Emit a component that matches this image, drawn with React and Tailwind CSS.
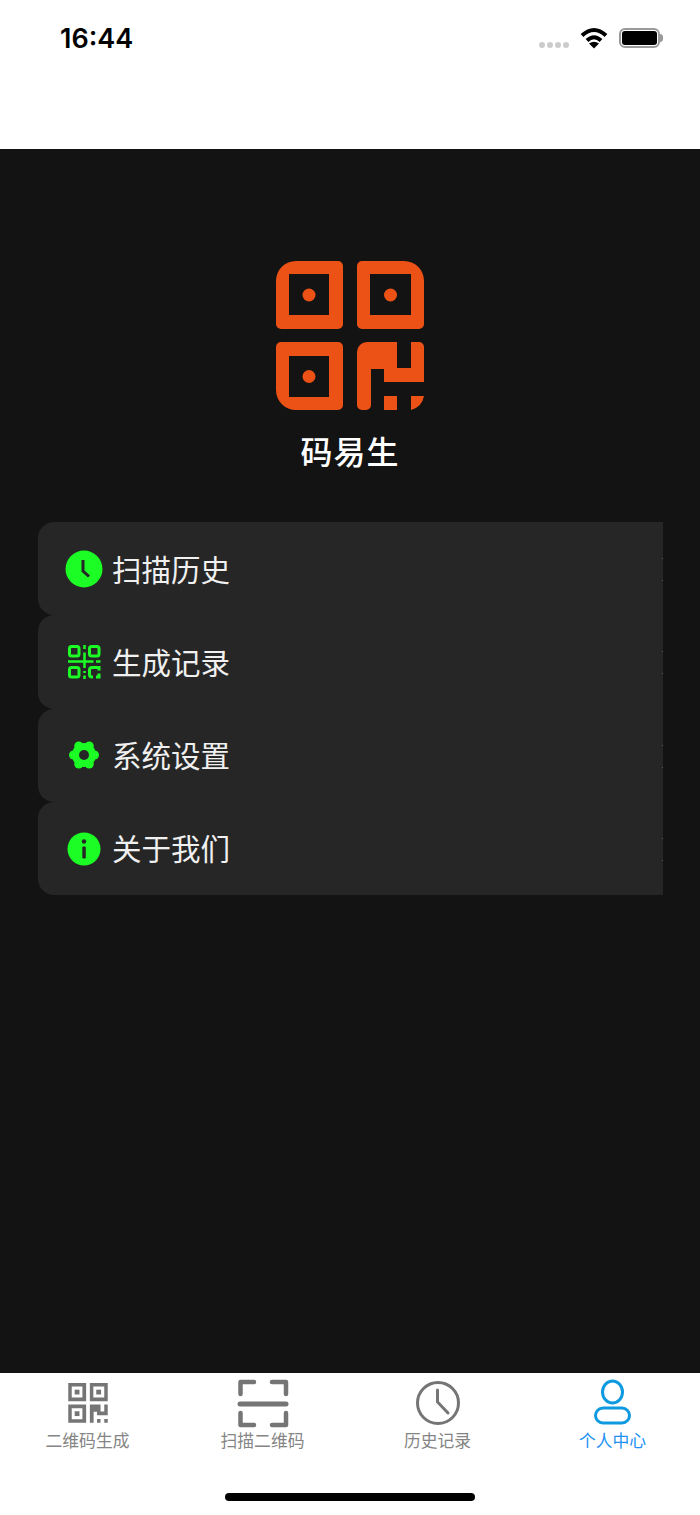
// App.jsx
const tabs = [
  { label: "二维码生成", icon: <QrTabIcon /> },
  { label: "扫描二维码", icon: <ScanIcon /> },
  { label: "历史记录", icon: <ClockOutlineIcon /> },
  { label: "个人中心", icon: <PersonIcon />, active: true },
];

const menu = [
  { label: "扫描历史", icon: <ClockFillIcon /> },
  { label: "生成记录", icon: <QrGreenIcon /> },
  { label: "系统设置", icon: <GearIcon /> },
  { label: "关于我们", icon: <InfoIcon /> },
];

function Logo() {
  return (
    <svg width="148" height="150" viewBox="0 0 148 150" fill="#EC5216">
      <path
        fillRule="evenodd"
        d="M20 0H62a5 5 0 0 1 5 5V63a5 5 0 0 1-5 5H5a5 5 0 0 1-5-5V20A20 20 0 0 1 20 0ZM13 13V54H53V13Z"
      />
      <circle cx="33" cy="34" r="6.5" />
      <path
        fillRule="evenodd"
        d="M86 0H128A20 20 0 0 1 148 20V63a5 5 0 0 1-5 5H86a5 5 0 0 1-5-5V5a5 5 0 0 1 5-5ZM94 13V54H135V13Z"
      />
      <circle cx="114.500" cy="34" r="6.5" />
      <path
        fillRule="evenodd"
        d="M5 81H62a5 5 0 0 1 5 5V144a5 5 0 0 1-5 5H20A20 20 0 0 1 0 129V86a5 5 0 0 1 5-5ZM13 95V136H53V95Z"
      />
      <circle cx="33" cy="115.500" r="6.5" />
      <path d="M91 81H121V107H135V81H143a5 5 0 0 1 5 5V121H108V108H95V144a5 5 0 0 1-5 5H86a5 5 0 0 1-5-5V91a10 10 0 0 1 10-10Z" />
      <path d="M108 135H121V149H108Z" />
      <path d="M135 135H148Q146 146 135 149Z" />
    </svg>
  );
}

function ClockFillIcon() {
  return (
    <svg width="38" height="38" viewBox="0 0 38 38">
      <circle cx="19" cy="19" r="18.500" fill="#1BFD24" />
      <path d="M18 10V21L24 26.500" fill="none" stroke="#262626" strokeWidth="3" />
    </svg>
  );
}

function QrGreenIcon() {
  return (
    <svg width="38" height="38" viewBox="0 0 38 38" fill="none" stroke="#1BFD24" strokeWidth="3">
      <rect x="4.500" y="3.500" width="9.500" height="9.500" rx="2" />
      <rect x="24.500" y="3.500" width="9.500" height="9.500" rx="2" />
      <rect x="4.500" y="24.500" width="9.500" height="9.500" rx="2" />
      <path d="M19.500 2V6M19.500 9.500V25M19.500 28V30M19.500 32.500V36" strokeWidth="2.500" />
      <path d="M3 18.500H28.500M31 18.500H35.500" strokeWidth="2.500" />
      <path d="M34 27.500V24.500H27A2.500 2.500 0 0 0 24.500 27V31.500A2.500 2.500 0 0 0 27 34H28M31 34H34V30.500" />
    </svg>
  );
}

function GearIcon() {
  const lobes = [0, 60, 120, 180, 240, 300];
  return (
    <svg width="38" height="38" viewBox="-19 -19 38 38" fill="#1BFD24">
      {lobes.map((a) => (
        <circle
          key={a}
          cx={10.5 * Math.cos((a * Math.PI) / 180)}
          cy={10.5 * Math.sin((a * Math.PI) / 180)}
          r="4.500"
        />
      ))}
      <circle r="12" />
      <circle r="5" fill="#262626" />
    </svg>
  );
}

function InfoIcon() {
  return (
    <svg width="38" height="38" viewBox="0 0 38 38">
      <circle cx="19" cy="19" r="16.500" fill="#1BFD24" />
      <circle cx="19" cy="11.500" r="2.200" fill="#262626" />
      <rect x="17.300" y="16.500" width="3.500" height="12" rx="1" fill="#262626" />
    </svg>
  );
}

function QrTabIcon() {
  return (
    <svg width="40" height="40" viewBox="0 0 148 150" fill="#757575">
      <path fillRule="evenodd" d="M0 0H67V68H0ZM13 13V54H53V13Z" />
      <rect x="24" y="25" width="18" height="18" />
      <path fillRule="evenodd" d="M81 0H148V68H81ZM94 13V54H135V13Z" />
      <rect x="105" y="25" width="18" height="18" />
      <path fillRule="evenodd" d="M0 81H67V149H0ZM13 95V136H53V95Z" />
      <rect x="24" y="106" width="18" height="18" />
      <path d="M81 81H121V107H135V81H148V121H108V108H95V149H81Z" />
      <path d="M108 135H121V149H108ZM135 135H148V149H135Z" />
    </svg>
  );
}

function ScanIcon() {
  return (
    <svg width="52" height="50" viewBox="0 0 52 50" fill="none" stroke="#757575" strokeWidth="4.500" strokeLinecap="round">
      <path d="M3.500 16V4H17M35 4H49V16M3.500 35V47H17M35 47H49V35" strokeLinejoin="round" />
      <path d="M3 26H49" strokeWidth="5" />
    </svg>
  );
}

function ClockOutlineIcon() {
  return (
    <svg width="46" height="46" viewBox="0 0 46 46" fill="none" stroke="#757575" strokeWidth="3" strokeLinecap="round">
      <circle cx="23" cy="23" r="20.500" />
      <path d="M22.500 10V22L33 33" />
    </svg>
  );
}

function PersonIcon() {
  return (
    <svg width="40" height="48" viewBox="0 0 40 48" fill="none" stroke="#0F9AE0" strokeWidth="3">
      <ellipse cx="19.500" cy="13" rx="10" ry="11" />
      <rect x="2.500" y="29" width="34" height="15" rx="7.500" />
    </svg>
  );
}

function StatusBar() {
  return (
    <div className="flex items-center h-[76px] pl-[60px] pr-[37px]">
      <span className="mt-[1px] font-['Inter',sans-serif] text-[27px] font-semibold text-black leading-none">16:44</span>
      <div className="ml-auto flex items-center gap-[11px]">
        <div className="flex gap-[2px] mt-[14px]">
          {[0, 1, 2, 3].map((i) => (
            <span key={i} className="w-[6px] h-[6px] rounded-full bg-[#cccccc]" />
          ))}
        </div>
        <svg width="28" height="22" viewBox="0 0 28 22" fill="none" stroke="#000" className="-mt-[1px]">
          <path d="M2 8.500Q14-2.500 26 8.500" strokeWidth="4" />
          <path d="M7 13.500Q14 7 21 13.500" strokeWidth="4" />
          <path d="M14 21.500L9 16.500Q14 13 19 16.500Z" fill="#000" stroke="none" />
        </svg>
        <div className="flex items-center">
          <div className="w-[41px] h-[20px] rounded-[6px] border-2 border-[#9a9a9a] p-[1px]">
            <div className="w-full h-full rounded-[3px] bg-black" />
          </div>
          <div className="w-[3px] h-[8px] rounded-r-full bg-[#9a9a9a]" />
        </div>
      </div>
    </div>
  );
}

export default function App() {
  return (
    <div className="w-[700px] h-[1515px] flex flex-col bg-white font-['Noto_Sans_CJK_SC','Liberation_Sans',sans-serif]">
      <header className="h-[149px] shrink-0 bg-white">
        <StatusBar />
      </header>

      <main className="flex-1 bg-[#131313] flex flex-col pt-[112px]">
        <div className="flex flex-col items-center">
          <Logo />
          <h1 className="mt-[16px] text-[32px] leading-[46px] font-medium tracking-[1px] text-white">码易生</h1>
        </div>

        <div className="mt-[49px] ml-[38px] w-[625px]">
          {menu.map((item) => (
            <div
              key={item.label}
              className="relative h-[93.3px] flex items-center pl-[27px] bg-[#262626] rounded-l-[16px]"
            >
              <div className="w-[38px] h-[38px] flex items-center justify-center">{item.icon}</div>
              <span className="ml-[9px] mb-[2px] text-[29.5px] font-normal text-[#f0f0f0]">{item.label}</span>
              {/* clipped chevron ends at the right edge */}
              <span className="absolute right-0 top-[36px] w-[1px] h-[1px] bg-[#5a5a5a]" />
              <span className="absolute right-0 top-[58px] w-[1px] h-[1px] bg-[#5a5a5a]" />
            </div>
          ))}
        </div>
      </main>

      <nav className="h-[142px] shrink-0 bg-white flex flex-col">
        <div className="grid grid-cols-4 pt-[3px]">
          {tabs.map((tab) => (
            <div key={tab.label} className="flex flex-col items-center">
              <div className="h-[54px] flex items-center justify-center">{tab.icon}</div>
              <span className={"-mt-[1px] text-[16.8px] leading-[22px] font-normal " + (tab.active ? "text-[#2090F5]" : "text-[#858585]")}>
                {tab.label}
              </span>
            </div>
          ))}
        </div>
        <div className="mt-[42px] mx-auto w-[250px] h-[8px] rounded-full bg-black" />
      </nav>
    </div>
  );
}
